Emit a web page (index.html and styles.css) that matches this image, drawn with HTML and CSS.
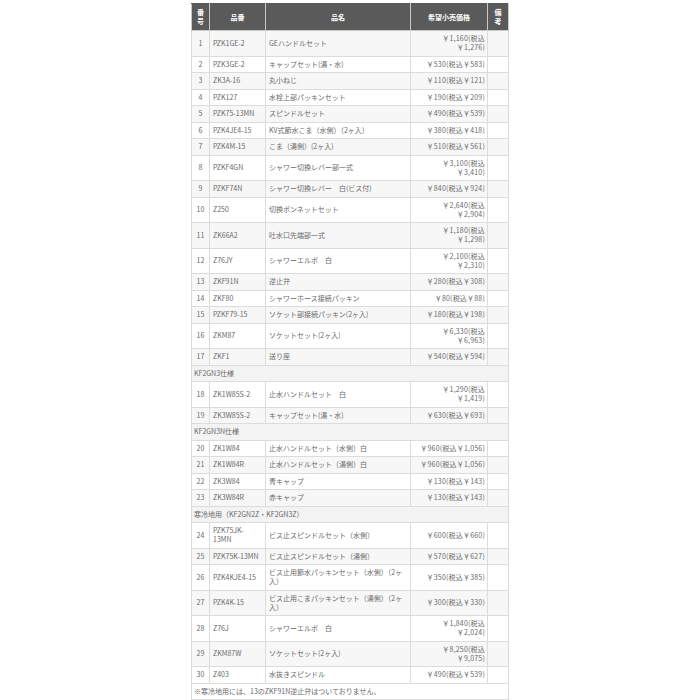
FILE: index.html
```html
<!DOCTYPE html>
<html lang="ja">
<head>
<meta charset="utf-8">
<title>部品表</title>
<link rel="stylesheet" href="styles.css">
</head>
<body>
<table class="parts">
<colgroup>
<col class="c-no"><col class="c-code"><col class="c-name"><col class="c-price"><col class="c-note">
</colgroup>
<thead>
<tr><th>番<br>号</th><th>品番</th><th>品名</th><th>希望小売価格</th><th>備<br>考</th></tr>
</thead>
<tbody>
<tr class="odd"><td class="no">1</td><td>PZK1GE-2</td><td>GEハンドルセット</td><td class="price">￥1,160(税込<br>￥1,276)</td><td></td></tr>
<tr><td class="no">2</td><td>PZK3GE-2</td><td>キャップセット(湯・水)</td><td class="price">￥530(税込￥583)</td><td></td></tr>
<tr class="odd"><td class="no">3</td><td>ZK3A-16</td><td>丸小ねじ</td><td class="price">￥110(税込￥121)</td><td></td></tr>
<tr><td class="no">4</td><td>PZK127</td><td>水栓上部パッキンセット</td><td class="price">￥190(税込￥209)</td><td></td></tr>
<tr class="odd"><td class="no">5</td><td>PZK75-13MN</td><td>スピンドルセット</td><td class="price">￥490(税込￥539)</td><td></td></tr>
<tr><td class="no">6</td><td>PZK4JE4-15</td><td>KV式節水こま（水側）（2ヶ入）</td><td class="price">￥380(税込￥418)</td><td></td></tr>
<tr class="odd"><td class="no">7</td><td>PZK4M-15</td><td>こま（湯側）(2ヶ入)</td><td class="price">￥510(税込￥561)</td><td></td></tr>
<tr><td class="no">8</td><td>PZKF4GN</td><td>シャワー切換レバー部一式</td><td class="price">￥3,100(税込<br>￥3,410)</td><td></td></tr>
<tr class="odd"><td class="no">9</td><td>PZKF74N</td><td>シャワー切換レバー　白(ビス付)</td><td class="price">￥840(税込￥924)</td><td></td></tr>
<tr><td class="no">10</td><td>Z250</td><td>切換ボンネットセット</td><td class="price">￥2,640(税込<br>￥2,904)</td><td></td></tr>
<tr class="odd"><td class="no">11</td><td>ZK66A2</td><td>吐水口先端部一式</td><td class="price">￥1,180(税込<br>￥1,298)</td><td></td></tr>
<tr><td class="no">12</td><td>Z76JY</td><td>シャワーエルボ　白</td><td class="price">￥2,100(税込<br>￥2,310)</td><td></td></tr>
<tr class="odd"><td class="no">13</td><td>ZKF91N</td><td>逆止弁</td><td class="price">￥280(税込￥308)</td><td></td></tr>
<tr><td class="no">14</td><td>ZKF80</td><td>シャワーホース接続パッキン</td><td class="price">￥80(税込￥88)</td><td></td></tr>
<tr class="odd"><td class="no">15</td><td>PZKF79-15</td><td>ソケット部接続パッキン(2ヶ入)</td><td class="price">￥180(税込￥198)</td><td></td></tr>
<tr><td class="no">16</td><td>ZKM87</td><td>ソケットセット(2ヶ入)</td><td class="price">￥6,330(税込<br>￥6,963)</td><td></td></tr>
<tr class="odd"><td class="no">17</td><td>ZKF1</td><td>送り座</td><td class="price">￥540(税込￥594)</td><td></td></tr>
<tr class="section"><td colspan="5">KF2GN3仕様</td></tr>
<tr><td class="no">18</td><td>ZK1W85S-2</td><td>止水ハンドルセット　白</td><td class="price">￥1,290(税込<br>￥1,419)</td><td></td></tr>
<tr class="odd"><td class="no">19</td><td>ZK3W85S-2</td><td>キャップセット(湯・水)</td><td class="price">￥630(税込￥693)</td><td></td></tr>
<tr class="section"><td colspan="5">KF2GN3N仕様</td></tr>
<tr><td class="no">20</td><td>ZK1W84</td><td>止水ハンドルセット（水側）白</td><td class="price">￥960(税込￥1,056)</td><td></td></tr>
<tr class="odd"><td class="no">21</td><td>ZK1W84R</td><td>止水ハンドルセット（湯側）白</td><td class="price">￥960(税込￥1,056)</td><td></td></tr>
<tr><td class="no">22</td><td>ZK3W84</td><td>青キャップ</td><td class="price">￥130(税込￥143)</td><td></td></tr>
<tr class="odd"><td class="no">23</td><td>ZK3W84R</td><td>赤キャップ</td><td class="price">￥130(税込￥143)</td><td></td></tr>
<tr class="section"><td colspan="5">寒冷地用（KF2GN2Z・KF2GN3Z）</td></tr>
<tr><td class="no">24</td><td>PZK75JK-<br>13MN</td><td>ビス止スピンドルセット（水側）</td><td class="price">￥600(税込￥660)</td><td></td></tr>
<tr class="odd"><td class="no">25</td><td>PZK75K-13MN</td><td>ビス止スピンドルセット（湯側）</td><td class="price">￥570(税込￥627)</td><td></td></tr>
<tr><td class="no">26</td><td>PZK4KJE4-15</td><td>ビス止用節水パッキンセット（水側）（2ヶ<br>入）</td><td class="price">￥350(税込￥385)</td><td></td></tr>
<tr class="odd"><td class="no">27</td><td>PZK4K-15</td><td>ビス止用こまパッキンセット（湯側）（2ヶ<br>入）</td><td class="price">￥300(税込￥330)</td><td></td></tr>
<tr><td class="no">28</td><td>Z76J</td><td>シャワーエルボ　白</td><td class="price">￥1,840(税込<br>￥2,024)</td><td></td></tr>
<tr class="odd"><td class="no">29</td><td>ZKM87W</td><td>ソケットセット(2ヶ入)</td><td class="price">￥8,250(税込<br>￥9,075)</td><td></td></tr>
<tr><td class="no">30</td><td>Z403</td><td>水抜きスピンドル</td><td class="price">￥490(税込￥539)</td><td></td></tr>
<tr class="foot"><td colspan="5">※寒冷地用には、13のZKF91N逆止弁はついておりません。</td></tr>
</tbody>
</table>
</body>
</html>
```
FILE: styles.css
```css
html, body {
  margin: 0;
  padding: 0;
  background: #ffffff;
}
body {
  font-family: "Noto Sans CJK JP", "Noto Sans", sans-serif;
  font-size: 7px;
  line-height: 9px;
  color: #6a6a6a;
}
.parts {
  border-collapse: collapse;
  table-layout: fixed;
  width: 317px;
  margin: 3px auto 0;
  border: 1px solid #d6d6d6;
}
.c-no { width: 18px; }
.c-code { width: 56px; }
.c-name { width: 145px; }
.c-price { width: 77px; }
.c-note { width: 21px; }
.parts th {
  background: #5a5a5a;
  color: #ffffff;
  font-weight: bold;
  text-align: center;
  vertical-align: middle;
  padding: 4px 1px;
  border: 1px solid #c8c8c8;
  border-top-color: #5a5a5a;
}
.parts td {
  border: 1px solid #dcdcdc;
  padding: 3.25px 3px;
  vertical-align: middle;
  white-space: nowrap;
  overflow: hidden;
  background: #ffffff;
}
.parts tr.odd td {
  background: #f7f7f7;
}
.parts td.no {
  text-align: center;
  padding-left: 1px;
  padding-right: 1px;
}
.parts td.price {
  text-align: right;
  padding-right: 2px;
  padding-left: 1px;
  letter-spacing: 0.2px;
}
.parts tr.section td {
  background: #f3f3f3;
  padding-left: 2px;
}
.parts tr.foot td {
  background: #ffffff;
  padding-left: 2px;
}
```
